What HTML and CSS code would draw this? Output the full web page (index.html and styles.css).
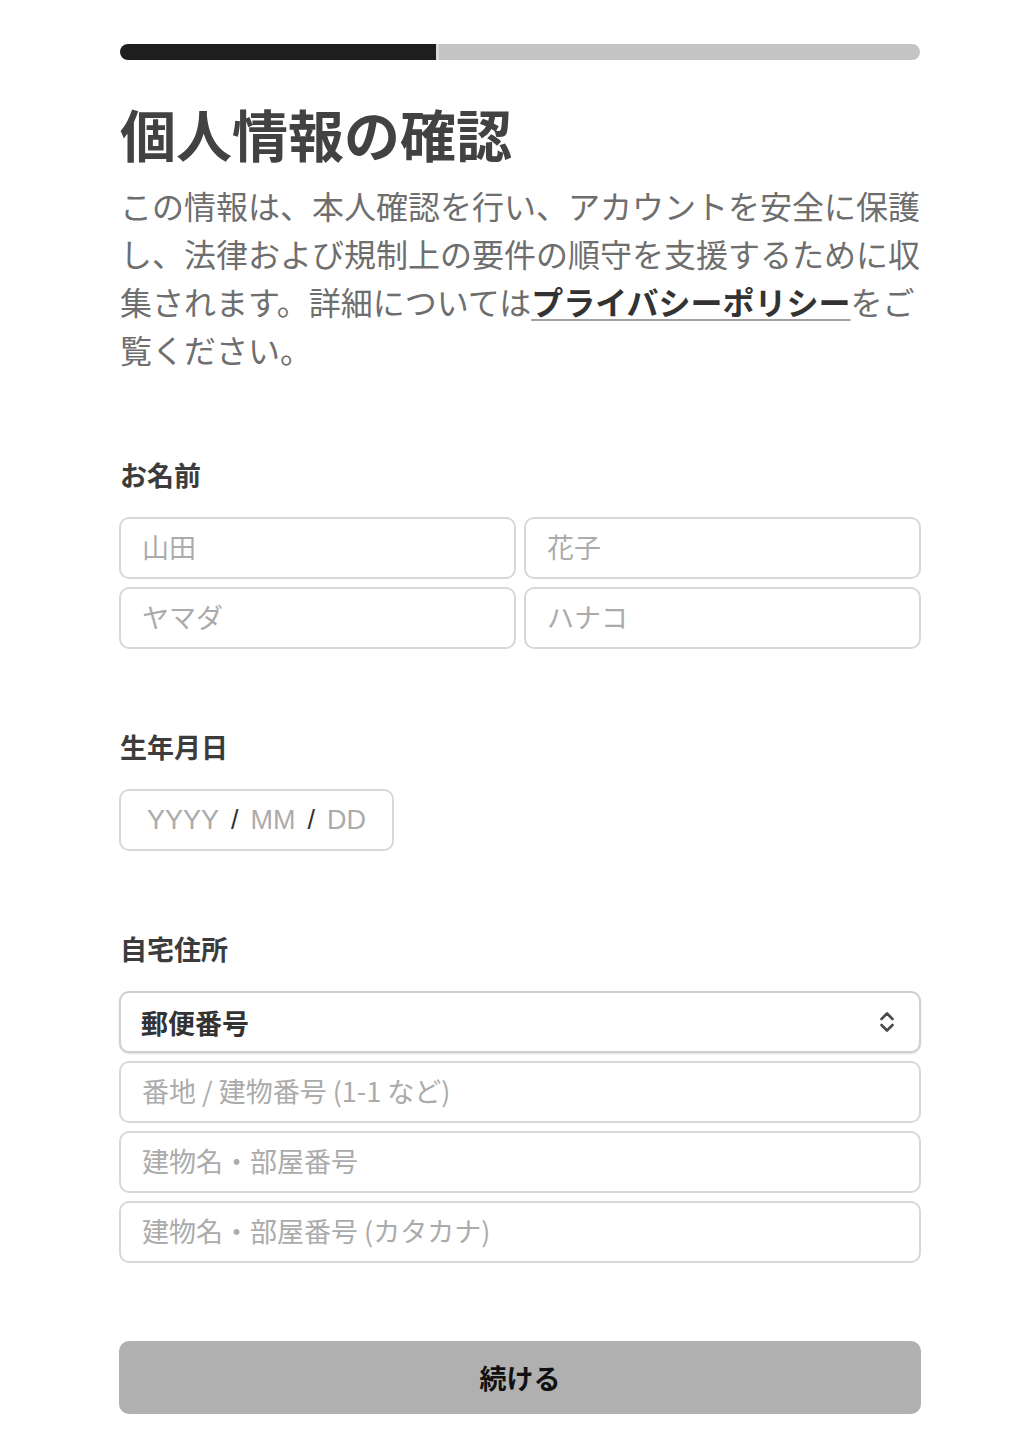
FILE: index.html
```html
<!DOCTYPE html>
<html lang="ja">
<head>
<meta charset="utf-8">
<title>個人情報の確認</title>
<link rel="stylesheet" href="styles.css">
</head>
<body>
<main class="page">
  <div class="progress">
    <div class="progress-done"></div>
    <div class="progress-sep"></div>
    <div class="progress-rest"></div>
  </div>

  <h1 class="title">個人情報の確認</h1>
  <p class="intro">この情報は、本人確認を行い、アカウントを安全に保護し、法律および規制上の要件の順守を支援するために収集されます。詳細については<a class="link" href="#">プライバシーポリシー</a>をご覧ください。</p>

  <section class="section">
    <h2 class="label">お名前</h2>
    <div class="grid2">
      <input class="field" type="text" placeholder="山田">
      <input class="field" type="text" placeholder="花子">
      <input class="field" type="text" placeholder="ヤマダ">
      <input class="field" type="text" placeholder="ハナコ">
    </div>
  </section>

  <section class="section">
    <h2 class="label">生年月日</h2>
    <div class="date">
      <span class="date-ph">YYYY</span><span class="date-sep">/</span><span class="date-ph">MM</span><span class="date-sep">/</span><span class="date-ph">DD</span>
    </div>
  </section>

  <section class="section">
    <h2 class="label">自宅住所</h2>
    <div class="stack">
      <div class="select">
        <span class="select-text">郵便番号</span>
        <svg class="chevron" width="16" height="24" viewBox="0 0 16 24" fill="none" stroke="#4a4a4a" stroke-width="2.6" stroke-linecap="round" stroke-linejoin="round"><path d="M2.5 9 L8 3.5 L13.5 9"/><path d="M2.5 15 L8 20.5 L13.5 15"/></svg>
      </div>
      <input class="field" type="text" placeholder="番地 / 建物番号 (1-1 など)">
      <input class="field" type="text" placeholder="建物名・部屋番号">
      <input class="field" type="text" placeholder="建物名・部屋番号 (カタカナ)">
    </div>
  </section>

  <button class="btn" type="button">続ける</button>
</main>
</body>
</html>
```

FILE: styles.css
```css
* { box-sizing: border-box; }

html, body {
  margin: 0;
  padding: 0;
  background: #ffffff;
}

body {
  font-family: "Noto Sans CJK JP", "Noto Sans", sans-serif;
  color: #444444;
}

.page {
  width: 802px;
  margin-left: 119px;
  padding-top: 44px;
  padding-bottom: 36px;
}

.progress {
  display: flex;
  height: 16px;
  margin: 0 1px;
  border-radius: 8px;
  overflow: hidden;
}

.progress-done {
  width: 316px;
  background: #1e1e1e;
}

.progress-sep {
  width: 3px;
  background: #dadada;
}

.progress-rest {
  flex: 1;
  background: #c4c4c4;
}

.title {
  margin: 39px 0 0 1px;
  font-size: 56px;
  line-height: 67px;
  font-weight: 700;
  color: #424242;
  letter-spacing: 0;
}

.intro {
  margin: 15px 0 0 1px;
  width: 800px;
  font-size: 32px;
  line-height: 48px;
  color: #6e6e6e;
  font-weight: 400;
}

.link {
  color: #333333;
  font-weight: 700;
  text-decoration: underline 2px #a0a0a0;
  text-decoration-color: #a0a0a0;
  text-underline-offset: 4px;
}

.section {
  margin-top: 82px;
}

.section + .section {
  margin-top: 78px;
}

.label {
  margin: 0 0 22px 1px;
  font-size: 27px;
  line-height: 40px;
  font-weight: 700;
  color: #3c3c3c;
}

.grid2 {
  display: grid;
  grid-template-columns: 1fr 1fr;
  gap: 8px;
}

.stack {
  display: flex;
  flex-direction: column;
  gap: 8px;
}

.field {
  display: block;
  width: 100%;
  height: 62px;
  margin: 0;
  padding: 0 21px 3px;
  border: 2px solid #d8d8d8;
  border-radius: 10px;
  background: #ffffff;
  font-family: "Noto Sans CJK JP", "Noto Sans", sans-serif;
  font-size: 27px;
  color: #333333;
  outline: none;
}

.field::placeholder {
  color: #ababab;
  opacity: 1;
}

.date {
  display: flex;
  align-items: center;
  gap: 12px;
  width: 275px;
  height: 62px;
  padding: 0 26px;
  border: 2px solid #d8d8d8;
  border-radius: 10px;
  font-family: "Liberation Sans", Arial, sans-serif;
  font-size: 27px;
}

.date-ph {
  color: #ababab;
}

.date-sep {
  color: #333333;
}

.select {
  display: flex;
  align-items: center;
  justify-content: space-between;
  height: 62px;
  padding: 0 20px 0 20px;
  border: 2px solid #d0d0d0;
  border-radius: 10px;
  box-shadow: 0 1px 2px rgba(0, 0, 0, 0.14);
  background: #ffffff;
}

.select-text {
  font-size: 27px;
  font-weight: 700;
  color: #333333;
}

.chevron {
  display: block;
  margin-right: 4px;
}

.btn {
  display: block;
  width: 100%;
  height: 73px;
  margin-top: 78px;
  border: none;
  border-radius: 10px;
  background: #b0b0b0;
  font-family: "Noto Sans CJK JP", "Noto Sans", sans-serif;
  font-size: 27px;
  font-weight: 700;
  color: #111111;
  cursor: pointer;
}
```
